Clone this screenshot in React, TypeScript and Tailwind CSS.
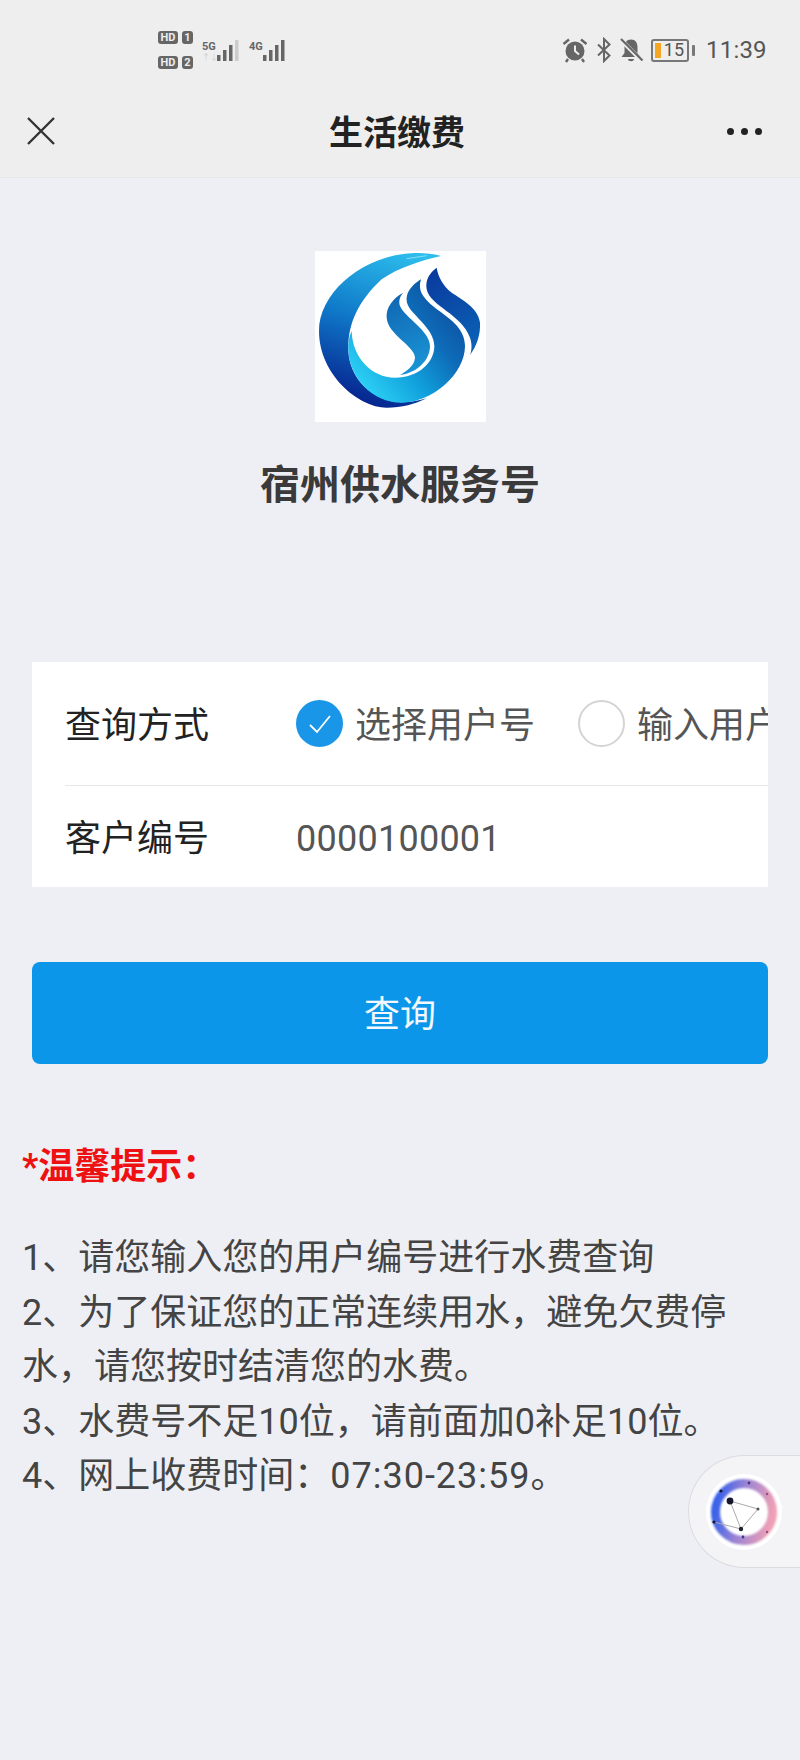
import React from "react";

function Bars({ dim }: { dim?: boolean }) {
  return (
    <svg width="25" height="24" viewBox="0 0 25 24" className="block">
      <rect x="1" y="16" width="3.5" height="6" fill="#666" />
      <rect x="7" y="11" width="3.5" height="11" fill="#666" />
      <rect x="13" y="6" width="3.5" height="16" fill="#666" />
      <rect x="19" y="1" width="3.5" height="21" fill={dim ? "#ccc" : "#666"} />
    </svg>
  );
}

function HdRow({ n }: { n: string }) {
  return (
    <div className="flex items-center gap-[4px]">
      <span className="flex h-[13px] w-[20px] items-center justify-center rounded-[3px] bg-[#666] text-[11px] leading-none font-bold text-[#eee]">HD</span>
      <span className="flex h-[13px] w-[11px] items-center justify-center rounded-[3px] bg-[#666] text-[11px] leading-none font-bold text-[#eee]">{n}</span>
    </div>
  );
}

function StatusBar() {
  return (
    <div className="flex h-[100px] items-center text-[#555]">
      <div className="ml-[158px] flex flex-col gap-[12px]">
        <HdRow n="1" />
        <HdRow n="2" />
      </div>
      <div className="ml-[9px] flex items-end self-center pt-[1px]">
        <div className="flex w-[14px] flex-col">
          <span className="text-[11px] leading-[11px] font-bold text-[#666]">5G</span>
          <span className="text-[8px] leading-[11px] text-[#ccc]">↑↓</span>
        </div>
        <Bars dim />
      </div>
      <div className="ml-[8px] flex items-end self-center pt-[1px]">
        <span className="mb-[11px] w-[13px] text-[11px] leading-[11px] font-bold text-[#666]">4G</span>
        <Bars />
      </div>
      <svg width="26" height="26" viewBox="0 0 26 26" className="ml-[275px] block">
        <circle cx="13" cy="14" r="9.5" fill="#666" />
        <path d="M13 8.5V14L17 17.5" stroke="#eee" strokeWidth="2" fill="none" />
        <path d="M1.5 7L7 2.5M24.5 7L19 2.5M6 22L4 25M20 22L22 25" stroke="#666" strokeWidth="2.4" fill="none" />
      </svg>
      <svg width="18" height="26" viewBox="0 0 18 26" className="ml-[7px] block">
        <path d="M3 7.5L14.5 18.5L9 24V2L14.5 7.5L3 18.5" stroke="#666" strokeWidth="2" fill="none" />
      </svg>
      <svg width="26" height="26" viewBox="0 0 26 26" className="ml-[5px] block">
        <path d="M13 2.5C8.5 2.5 6.5 6 6.5 10V16L3.5 20H22.5L19.5 16V10C19.5 6 17.5 2.5 13 2.5Z" fill="#666" />
        <path d="M10 22H16C16 25 10 25 10 22Z" fill="#666" />
        <path d="M2.5 2.5L24 24" stroke="#eee" strokeWidth="4" />
        <path d="M3 2L24.5 23.5" stroke="#666" strokeWidth="2.2" />
      </svg>
      <div className="relative ml-[7px] flex h-[23px] w-[38px] items-center justify-end overflow-hidden rounded-[3px] border-2 border-[#777] pr-[3px] text-[18px] leading-none">
        <span className="absolute top-[2px] bottom-[2px] left-[2px] w-[6px] bg-[#f5a623]" />
        <span className="relative">15</span>
      </div>
      <span className="ml-[3px] h-[11px] w-[3px] rounded-[1px] bg-[#777]" />
      <span className="ml-[11px] text-[24px] leading-none tracking-[0.2px] text-[#555]">11:39</span>
    </div>
  );
}

function NavBar() {
  return (
    <div className="flex h-[78px] items-start border-b border-[#e7e7ea] pl-[27px] pr-[38px]">
      <svg width="28" height="28" viewBox="0 0 28 28" className="mt-[17px] block">
        <path d="M1 1L27 27M27 1L1 27" stroke="#333" strokeWidth="2.4" fill="none" />
      </svg>
      <span className="mt-[9px] ml-[274px] text-[34px] leading-[48px] font-bold text-[#222]">生活缴费</span>
      <div className="mt-[28px] ml-auto flex gap-[7px]">
        <span className="h-[7px] w-[7px] rounded-full bg-[#222]" />
        <span className="h-[7px] w-[7px] rounded-full bg-[#222]" />
        <span className="h-[7px] w-[7px] rounded-full bg-[#222]" />
      </div>
    </div>
  );
}

function Logo() {
  return (
    <div className="mx-auto mt-[73px] h-[171px] w-[171px] bg-white">
      <svg width="171" height="171" viewBox="0 0 513 513" className="block">
        <defs>
          <linearGradient id="big" gradientUnits="userSpaceOnUse" x1="300" y1="10" x2="150" y2="460">
            <stop offset="0" stopColor="#2cbdec" />
            <stop offset="0.5" stopColor="#0f78c8" />
            <stop offset="1" stopColor="#06238e" />
          </linearGradient>
          <linearGradient id="mid" gradientUnits="userSpaceOnUse" x1="130" y1="400" x2="400" y2="180">
            <stop offset="0" stopColor="#2ed2f6" />
            <stop offset="0.4" stopColor="#10a0dc" />
            <stop offset="0.75" stopColor="#0e6cb8" />
            <stop offset="1" stopColor="#0d58a8" />
          </linearGradient>
          <linearGradient id="inner" gradientUnits="userSpaceOnUse" x1="230" y1="140" x2="320" y2="360">
            <stop offset="0" stopColor="#1167b5" />
            <stop offset="1" stopColor="#1a96d6" />
          </linearGradient>
          <linearGradient id="right" gradientUnits="userSpaceOnUse" x1="350" y1="60" x2="480" y2="290">
            <stop offset="0" stopColor="#0a3a9e" />
            <stop offset="1" stopColor="#0b62b6" />
          </linearGradient>
        </defs>
        <path d="M378 15C340 4 300 5 270 8C130 25 12 130 12 240C12 370 130 470 215 470C260 470 300 460 335 442C290 455 250 458 220 448C160 430 105 380 100 300C97 220 130 150 200 85C250 50 320 28 378 15Z" fill="url(#big)" />
        <path d="M100 300C105 380 170 455 260 455C350 455 450 370 450 285C450 230 400 200 360 170C320 140 308 115 318 85C285 105 265 135 280 165C295 195 358 235 358 285C358 335 310 380 240 380C170 380 112 320 110 240C100 260 99 280 100 300Z" fill="url(#mid)" />
        <path d="M265 125C235 140 212 170 215 200C218 250 300 285 300 320C298 345 275 360 255 372C310 365 345 325 345 285C345 240 270 200 255 165C250 150 255 135 265 125Z" fill="url(#inner)" />
        <path d="M365 50C345 65 330 85 335 115C345 165 440 190 465 260C472 280 470 300 465 312C485 285 497 250 495 215C490 170 440 145 410 125C385 105 370 80 365 50Z" fill="url(#right)" />
        <path d="M275 23L335 14" stroke="#fff" strokeWidth="2" opacity="0.7" />
      </svg>
    </div>
  );
}

function Radio({ checked }: { checked?: boolean }) {
  if (checked) {
    return (
      <span className="flex h-[47px] w-[47px] shrink-0 items-center justify-center rounded-full bg-[#1a96e8]">
        <svg width="26" height="22" viewBox="0 0 26 22" className="block">
          <path d="M3 12L10 19L23 3" stroke="#fff" strokeWidth="1.8" fill="none" />
        </svg>
      </span>
    );
  }
  return <span className="ml-[43px] h-[47px] w-[47px] shrink-0 rounded-full border-2 border-[#d4d4d4] bg-white" />;
}

function Card() {
  return (
    <div className="mx-[32px] mt-[147px] overflow-hidden bg-white text-[36px] whitespace-nowrap">
      <div className="ml-[33px] flex h-[124px] items-center border-b border-[#e8e8e8]">
        <span className="w-[231px] shrink-0 pt-[4px] text-[#222]">查询方式</span>
        <Radio checked />
        <span className="ml-[12px] shrink-0 pt-[4px] text-[#555]">选择用户号</span>
        <Radio />
        <span className="ml-[12px] shrink-0 pt-[4px] text-[#555]">输入用户号</span>
      </div>
      <div className="ml-[33px] flex h-[101px] items-center">
        <span className="w-[231px] shrink-0 pt-[4px] text-[#222]">客户编号</span>
        <span className="pt-[4px] tracking-[0.25px] text-[#555]">0000100001</span>
      </div>
    </div>
  );
}

function FloatBall() {
  return (
    <div className="absolute top-[1455px] right-0 flex h-[113px] w-[112px] items-center rounded-l-[57px] border border-r-0 border-[#dcdcdf] bg-[#f4f4f6] pl-[16px]">
      <svg width="78" height="78" viewBox="0 0 78 78" className="block">
        <defs>
          <linearGradient id="ring" x1="0" y1="0.4" x2="1" y2="0.6">
            <stop offset="0" stopColor="#3a62ea" />
            <stop offset="0.45" stopColor="#9c84d4" />
            <stop offset="1" stopColor="#f0a0b4" />
          </linearGradient>
          <filter id="soft"><feGaussianBlur stdDeviation="1" /></filter>
        </defs>
        <circle cx="39" cy="39" r="38" fill="#fff" />
        <circle cx="39" cy="39" r="28.5" fill="none" stroke="url(#ring)" strokeWidth="9" filter="url(#soft)" />
        <path d="M25 28L53 36L36 56L25 28ZM36 56L9 49" stroke="#aaa" strokeWidth="1" fill="none" />
        <circle cx="25" cy="28" r="3.4" fill="#151530" />
        <circle cx="36" cy="56" r="2.2" fill="#222238" />
        <circle cx="53" cy="36" r="1.5" fill="#555" />
        <circle cx="16" cy="18" r="1.6" fill="#151530" />
        <circle cx="44" cy="10" r="1.4" fill="#443a80" />
        <circle cx="62" cy="21" r="1.2" fill="#8a5080" />
        <circle cx="9" cy="49" r="1.6" fill="#151530" />
        <circle cx="38" cy="64" r="1.4" fill="#3a3a90" />
        <circle cx="62" cy="59" r="1.2" fill="#8a5080" />
      </svg>
    </div>
  );
}

export default function App() {
  return (
    <div className="relative h-[1760px] w-[800px] overflow-hidden bg-[#eeeff5] [font-family:Roboto,'Noto_Sans_CJK_SC',sans-serif]">
      <div className="bg-[#eeeeee]">
        <StatusBar />
        <NavBar />
      </div>
      <Logo />
      <div className="mt-[34px] text-center text-[40px] leading-[60px] font-bold text-[#3a3a3a]">宿州供水服务号</div>
      <div className="h-px" />
      <div className="-mt-[2px]">
        <Card />
      </div>
      <button className="mx-[32px] mt-[75px] block h-[102px] w-[736px] rounded-[8px] bg-[#0c96ea] pt-[4px] text-[36px] text-[#f2f8fd]">查询</button>
      <div className="mt-[76px] px-[22px] text-[36px] leading-[55px] text-[#444]">
        <div className="font-bold text-[#ee1111]">*温馨提示：</div>
        <div className="mt-[36px] w-[760px] leading-[54.5px]">
          <p>1、请您输入您的用户编号进行水费查询</p>
          <p>2、为了保证您的正常连续用水，避免欠费停水，请您按时结清您的水费。</p>
          <p>3、水费号不足10位，请前面加0补足10位。</p>
          <p>4、网上收费时间：<span className="tracking-[1px]">07:30-23:59</span>。</p>
        </div>
      </div>
      <FloatBall />
    </div>
  );
}
